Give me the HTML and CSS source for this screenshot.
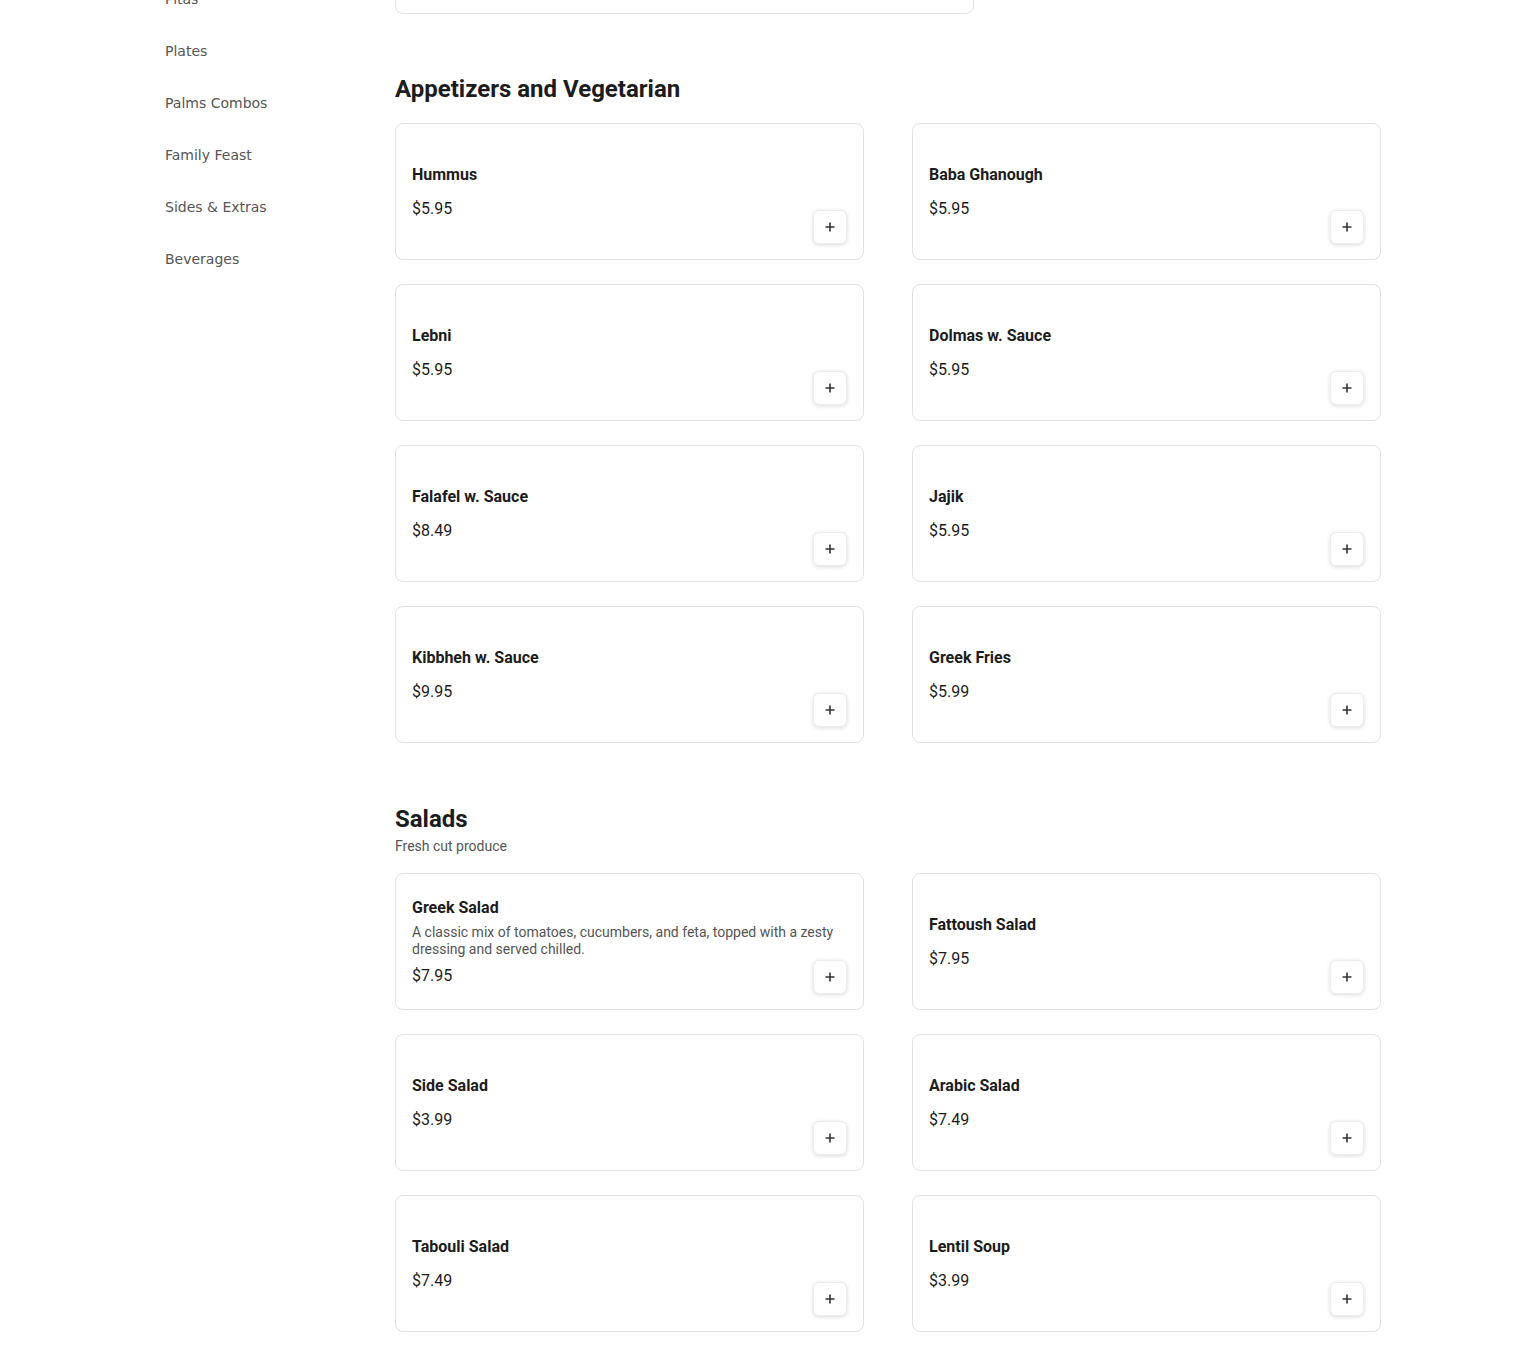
FILE: index.html
```html
<!DOCTYPE html>
<html lang="en">
<head>
<meta charset="utf-8">
<title>Menu</title>
<link rel="stylesheet" href="styles.css">
</head>
<body>
<div class="page">
  <aside class="sidebar">
    <nav class="nav">
      <a class="nav-link" href="#">Pitas</a>
      <a class="nav-link" href="#">Plates</a>
      <a class="nav-link" href="#">Palms Combos</a>
      <a class="nav-link" href="#">Family Feast</a>
      <a class="nav-link" href="#">Sides &amp; Extras</a>
      <a class="nav-link" href="#">Beverages</a>
    </nav>
  </aside>
  <main class="main">
    <section class="section section-prev">
      <div class="prev-card"></div>
    </section>

    <section class="section">
      <h2 class="section-title">Appetizers and Vegetarian</h2>
      <div class="grid">
        <div class="card"><div class="info"><div class="name">Hummus</div><div class="price">$5.95</div></div><button class="add"><svg viewBox="0 0 12 12" width="12" height="12"><path d="M6 1.5v9M1.5 6h9" stroke="#333" stroke-width="1.6" fill="none"/></svg></button></div>
        <div class="card"><div class="info"><div class="name">Baba Ghanough</div><div class="price">$5.95</div></div><button class="add"><svg viewBox="0 0 12 12" width="12" height="12"><path d="M6 1.5v9M1.5 6h9" stroke="#333" stroke-width="1.6" fill="none"/></svg></button></div>
        <div class="card"><div class="info"><div class="name">Lebni</div><div class="price">$5.95</div></div><button class="add"><svg viewBox="0 0 12 12" width="12" height="12"><path d="M6 1.5v9M1.5 6h9" stroke="#333" stroke-width="1.6" fill="none"/></svg></button></div>
        <div class="card"><div class="info"><div class="name">Dolmas w. Sauce</div><div class="price">$5.95</div></div><button class="add"><svg viewBox="0 0 12 12" width="12" height="12"><path d="M6 1.5v9M1.5 6h9" stroke="#333" stroke-width="1.6" fill="none"/></svg></button></div>
        <div class="card"><div class="info"><div class="name">Falafel w. Sauce</div><div class="price">$8.49</div></div><button class="add"><svg viewBox="0 0 12 12" width="12" height="12"><path d="M6 1.5v9M1.5 6h9" stroke="#333" stroke-width="1.6" fill="none"/></svg></button></div>
        <div class="card"><div class="info"><div class="name">Jajik</div><div class="price">$5.95</div></div><button class="add"><svg viewBox="0 0 12 12" width="12" height="12"><path d="M6 1.5v9M1.5 6h9" stroke="#333" stroke-width="1.6" fill="none"/></svg></button></div>
        <div class="card"><div class="info"><div class="name">Kibbheh w. Sauce</div><div class="price">$9.95</div></div><button class="add"><svg viewBox="0 0 12 12" width="12" height="12"><path d="M6 1.5v9M1.5 6h9" stroke="#333" stroke-width="1.6" fill="none"/></svg></button></div>
        <div class="card"><div class="info"><div class="name">Greek Fries</div><div class="price">$5.99</div></div><button class="add"><svg viewBox="0 0 12 12" width="12" height="12"><path d="M6 1.5v9M1.5 6h9" stroke="#333" stroke-width="1.6" fill="none"/></svg></button></div>
      </div>
    </section>

    <section class="section section-salads">
      <h2 class="section-title has-sub">Salads</h2>
      <p class="section-sub">Fresh cut produce</p>
      <div class="grid">
        <div class="card"><div class="info"><div class="name">Greek Salad</div><div class="desc">A classic mix of tomatoes, cucumbers, and feta, topped with a zesty dressing and served chilled.</div><div class="price">$7.95</div></div><button class="add"><svg viewBox="0 0 12 12" width="12" height="12"><path d="M6 1.5v9M1.5 6h9" stroke="#333" stroke-width="1.6" fill="none"/></svg></button></div>
        <div class="card"><div class="info"><div class="name">Fattoush Salad</div><div class="price">$7.95</div></div><button class="add"><svg viewBox="0 0 12 12" width="12" height="12"><path d="M6 1.5v9M1.5 6h9" stroke="#333" stroke-width="1.6" fill="none"/></svg></button></div>
        <div class="card"><div class="info"><div class="name">Side Salad</div><div class="price">$3.99</div></div><button class="add"><svg viewBox="0 0 12 12" width="12" height="12"><path d="M6 1.5v9M1.5 6h9" stroke="#333" stroke-width="1.6" fill="none"/></svg></button></div>
        <div class="card"><div class="info"><div class="name">Arabic Salad</div><div class="price">$7.49</div></div><button class="add"><svg viewBox="0 0 12 12" width="12" height="12"><path d="M6 1.5v9M1.5 6h9" stroke="#333" stroke-width="1.6" fill="none"/></svg></button></div>
        <div class="card"><div class="info"><div class="name">Tabouli Salad</div><div class="price">$7.49</div></div><button class="add"><svg viewBox="0 0 12 12" width="12" height="12"><path d="M6 1.5v9M1.5 6h9" stroke="#333" stroke-width="1.6" fill="none"/></svg></button></div>
        <div class="card"><div class="info"><div class="name">Lentil Soup</div><div class="price">$3.99</div></div><button class="add"><svg viewBox="0 0 12 12" width="12" height="12"><path d="M6 1.5v9M1.5 6h9" stroke="#333" stroke-width="1.6" fill="none"/></svg></button></div>
      </div>
    </section>
  </main>
</div>
</body>
</html>
```

FILE: styles.css
```css
* { box-sizing: border-box; }

html, body {
  margin: 0;
  padding: 0;
  background: #ffffff;
}

body {
  font-family: Roboto, "Liberation Sans", Arial, sans-serif;
  color: #1a1a1a;
  overflow: hidden;
}

.page {
  display: flex;
  align-items: flex-start;
  padding-left: 165px;
  margin-top: -123px;
}

.sidebar {
  width: 230px;
  flex: none;
  padding-top: 96px;
}

.nav {
  display: flex;
  flex-direction: column;
}

.nav-link {
  display: block;
  font-family: "DejaVu Sans", "Noto Sans", sans-serif;
  font-size: 14px;
  line-height: 20px;
  padding: 16px 0;
  color: #555555;
  text-decoration: none;
}

.main {
  width: 986px;
  flex: none;
}

.section + .section {
  margin-top: 60px;
}

.section-salads {
  padding-top: 1px;
}

.prev-card {
  width: 579px;
  height: 137px;
  border: 1px solid #e3e3e3;
  border-radius: 8px;
}

.section-title {
  margin: 0 0 19px;
  font-size: 24px;
  line-height: 30px;
  font-weight: 700;
  color: #1c1c1c;
}

.section-title.has-sub {
  margin-bottom: 2px;
}

.section-sub {
  margin: 0 0 17px;
  font-size: 14px;
  line-height: 20px;
  color: #555555;
}

.grid {
  display: grid;
  grid-template-columns: 469px 469px;
  column-gap: 48px;
  row-gap: 24px;
}

.card {
  position: relative;
  height: 137px;
  border: 1px solid #e2e2e2;
  border-radius: 8px;
  padding: 16px;
  display: flex;
  align-items: center;
  background: #fff;
}

.info {
  width: 100%;
}

.name {
  font-size: 16px;
  line-height: 24px;
  font-weight: 700;
  color: #1c1c1c;
}

.name + .price {
  margin-top: 10px;
}

.desc {
  margin: 4px 0 6px;
  font-size: 14px;
  line-height: 17px;
  color: #555555;
}

.price {
  font-size: 16px;
  line-height: 24px;
  color: #1c1c1c;
}

.add {
  position: absolute;
  right: 16px;
  bottom: 15px;
  width: 34px;
  height: 34px;
  padding: 0;
  border: 1px solid #ececec;
  border-radius: 6px;
  background: #fff;
  box-shadow: 0 1px 4px rgba(0, 0, 0, 0.14);
  display: flex;
  align-items: center;
  justify-content: center;
  cursor: pointer;
}

.add svg {
  display: block;
}
```
